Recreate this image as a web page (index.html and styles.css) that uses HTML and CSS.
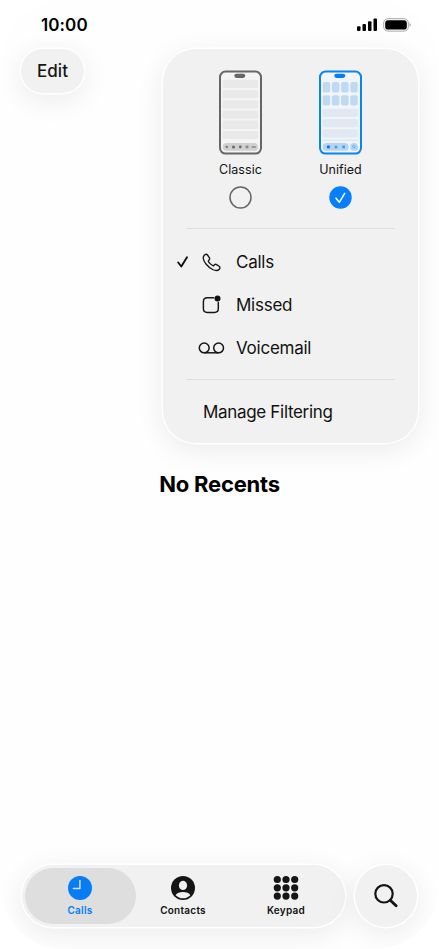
FILE: index.html
```html
<!DOCTYPE html>
<html lang="en">
<head>
<meta charset="utf-8">
<title>Recents</title>
<link rel="stylesheet" href="styles.css">
</head>
<body>
<div class="screen">
  <header class="status">
    <span class="time">10:00</span>
    <svg class="indicators" width="56" height="16" viewBox="0 0 56 16">
      <rect x="0" y="9.3" width="3.5" height="4.7" rx="1"/>
      <rect x="5.5" y="7" width="3.5" height="7" rx="1"/>
      <rect x="11" y="4.3" width="3.5" height="9.7" rx="1"/>
      <rect x="16.5" y="1.5" width="3.5" height="12.500" rx="1"/>
      <rect x="26.700" y="1.700" width="24.600" height="12.400" rx="4.200" fill="none" stroke="#aaa6a9"/>
      <rect x="28.200" y="3.200" width="21.600" height="9.400" rx="2.900"/>
      <path d="M52.500 5.900C54.300 6.500 54.300 9.200 52.500 9.800Z" fill="#aaa6a9"/>
    </svg>
  </header>

  <div class="toolbar">
    <button class="edit glass">Edit</button>
    <section class="menu glass">
      <div class="layouts">
        <div class="layout">
          <svg width="45" height="86" viewBox="0 0 45 86">
            <rect x="2" y="1.600" width="41" height="82" rx="5.500" fill="#f4f4f4" stroke="#666" stroke-width="2"/>
            <rect x="16.300" y="3.700" width="11" height="4.300" rx="2.150" fill="#666"/>
            <g fill="#e9e9e9">
              <rect x="4.700" y="9.800" width="35.300" height="8.300" rx="1.500"/>
              <rect x="4.700" y="20" width="35.300" height="8.300" rx="1.500"/>
              <rect x="4.700" y="30.200" width="35.300" height="8.300" rx="1.500"/>
              <rect x="4.700" y="40.400" width="35.300" height="8.300" rx="1.500"/>
              <rect x="4.700" y="50.600" width="35.300" height="8.300" rx="1.500"/>
              <rect x="4.700" y="60.800" width="35.300" height="8.300" rx="1.500"/>
            </g>
            <rect x="4.700" y="73" width="35.300" height="7.800" rx="3.900" fill="#d0d0d0"/>
            <g fill="#666">
              <path d="M8.800 75.200l.5 1 1.200.1-.9.800.3 1.200-1.100-.6-1.100.6.300-1.200-.9-.8 1.200-.1z"/>
              <circle cx="15.500" cy="76.900" r="1.500"/>
              <circle cx="22.300" cy="76.900" r="1.350"/>
              <rect x="27.700" y="75.600" width="2.700" height="2.700" fill="#888"/>
              <rect x="33.500" y="76.200" width="4.500" height="1.500" rx=".7" fill="#888"/>
            </g>
          </svg>
          <span>Classic</span>
          <svg class="radio" width="23" height="23" viewBox="0 0 23 23"><circle cx="11.500" cy="11.500" r="10.500" fill="none" stroke="#666" stroke-width="1.500"/></svg>
        </div>
        <div class="layout">
          <svg width="45" height="86" viewBox="0 0 45 86">
            <rect x="2" y="1.600" width="41" height="82" rx="5.500" fill="#f1f4f8" stroke="#0a84ef" stroke-width="2"/>
            <rect x="16.300" y="3.700" width="11" height="4.300" rx="2.150" fill="#087df0"/>
            <g fill="#bed9f1">
              <rect x="4.700" y="12" width="7.500" height="10.400" rx="2"/>
              <rect x="13.900" y="12" width="7.500" height="10.400" rx="2"/>
              <rect x="23.100" y="12" width="7.500" height="10.400" rx="2"/>
              <rect x="32.300" y="12" width="7.500" height="10.400" rx="2"/>
              <rect x="4.700" y="25.200" width="7.500" height="10.400" rx="2"/>
              <rect x="13.900" y="25.200" width="7.500" height="10.400" rx="2"/>
              <rect x="23.100" y="25.200" width="7.500" height="10.400" rx="2"/>
              <rect x="32.300" y="25.200" width="7.500" height="10.400" rx="2"/>
            </g>
            <g fill="#e2e8f1">
              <rect x="4.700" y="38.800" width="35.300" height="8.300" rx="1.500"/>
              <rect x="4.700" y="49" width="35.300" height="8.300" rx="1.500"/>
              <rect x="4.700" y="59.200" width="35.300" height="8.300" rx="1.500"/>
              <rect x="4.700" y="69.300" width="35.300" height="1.800"/>
            </g>
            <g fill="#b4d4f4">
              <rect x="4.700" y="73" width="26" height="7.800" rx="3.900"/>
              <circle cx="36.100" cy="76.900" r="3.900"/>
            </g>
            <circle cx="10.400" cy="76.900" r="1.700" fill="#087df0"/>
            <circle cx="18" cy="76.900" r="1.500" fill="#4b9ee8"/>
            <rect x="24.200" y="75.500" width="2.800" height="2.800" fill="#4b9ee8"/>
            <circle cx="35.800" cy="76.500" r="1.200" fill="none" stroke="#4b9ee8" stroke-width=".6"/>
            <path d="M36.700 77.400l1.200 1.200" stroke="#4b9ee8" stroke-width=".6"/>
          </svg>
          <span>Unified</span>
          <svg class="radio" width="23" height="23" viewBox="0 0 23 23"><circle cx="11.500" cy="11.500" r="11.200" fill="#087ffa"/><path d="M7 12.200l3.300 4.100 5.400-9" fill="none" stroke="#fff" stroke-width="1.500" stroke-linecap="round" stroke-linejoin="round"/></svg>
        </div>
      </div>
      <hr>
      <ul class="filters">
        <li>
          <svg class="tick" width="12" height="12" viewBox="0 0 12 12"><path d="M1.200 6.500l3.100 4L10 1.300" fill="none" stroke="#111" stroke-width="1.900" stroke-linecap="round" stroke-linejoin="round"/></svg>
          <svg class="icon" width="28" height="20" viewBox="0 0 28 20"><path d="M6.300 3.300C7.300 1.900 8.700 1.900 9.500 3l1.800 2.600c.7 1 .5 1.600-.2 2.300l-.5.600c-.4.500-.3.800 0 1.300 1 1.500 2.400 2.800 4 3.700.5.300.8.300 1.200-.1l.7-.7c.6-.6 1.300-.7 2.100-.1l2.500 1.700c1.100.8 1.100 1.900.2 2.900-1.600 1.800-4.100 1.500-6.600.3C9.800 15 5.400 9.700 5.200 6c0-1 .4-1.900 1.100-2.700Z" fill="none" stroke="#161616" stroke-width="1.350"/></svg>
          <span>Calls</span>
        </li>
        <li>
          <i class="tick"></i>
          <svg class="icon" width="28" height="20" viewBox="0 0 28 20"><path d="M15.600 2.800H9.300Q5.400 2.800 5.400 6.700v6.900q0 3.900 3.900 3.900h7.100q3.900 0 3.900-3.900V7.500" fill="none" stroke="#161616" stroke-width="1.450" stroke-linecap="round"/><circle cx="19.500" cy="3.600" r="3" fill="#111"/></svg>
          <span>Missed</span>
        </li>
        <li>
          <i class="tick"></i>
          <svg class="icon" width="28" height="20" viewBox="0 0 28 20"><g fill="none" stroke="#161616" stroke-width="1.500"><circle cx="6.200" cy="9.900" r="4.900"/><circle cx="20.600" cy="9.900" r="4.900"/><path d="M6.200 14.800H20.600"/></g></svg>
          <span>Voicemail</span>
        </li>
      </ul>
      <hr>
      <div class="manage">Manage Filtering</div>
    </section>
  </div>

  <h1>No Recents</h1>

  <nav class="bottom">
    <div class="tabs glass">
      <a class="tab active">
        <svg width="26" height="26" viewBox="0 0 26 26"><circle cx="13" cy="13" r="12" fill="#077df5"/><path d="M12.900 5.500v8.100H6.300" fill="none" stroke="#ddd" stroke-width="1.500" stroke-linecap="round" stroke-linejoin="round"/></svg>
        <span>Calls</span>
      </a>
      <a class="tab">
        <svg width="26" height="26" viewBox="0 0 26 26"><circle cx="13" cy="13" r="12" fill="#151515"/><ellipse cx="13" cy="10.400" rx="4.100" ry="4.600" fill="#f1f1f1"/><path d="M5.600 20.200C7.600 15.900 18.400 15.900 20.400 20.200C16.300 24.300 9.700 24.300 5.600 20.200Z" fill="#f1f1f1"/></svg>
        <span>Contacts</span>
      </a>
      <a class="tab">
        <svg width="26" height="26" viewBox="0 0 26 26"><g fill="#151515"><circle cx="4.300" cy="4.500" r="3.600"/><circle cx="13" cy="4.500" r="3.600"/><circle cx="21.700" cy="4.500" r="3.600"/><circle cx="4.300" cy="12.800" r="3.600"/><circle cx="13" cy="12.800" r="3.600"/><circle cx="21.700" cy="12.800" r="3.600"/><circle cx="4.300" cy="21.100" r="3.600"/><circle cx="13" cy="21.100" r="3.600"/><circle cx="21.700" cy="21.100" r="3.600"/></g></svg>
        <span>Keypad</span>
      </a>
    </div>
    <button class="search glass" aria-label="Search">
      <svg width="26" height="26" viewBox="0 0 26 26" fill="none" stroke="#151515"><circle cx="11" cy="10.800" r="8.700" stroke-width="2.200"/><path d="M17.300 17.200l5.800 5.600" stroke-width="2.900" stroke-linecap="round"/></svg>
    </button>
  </nav>
</div>
</body>
</html>
```

FILE: styles.css
```css
* { box-sizing: border-box; }

body {
  margin: 0;
  background: #fff;
  color: #111;
  font-family: Inter, "Liberation Sans", sans-serif;
}

.screen {
  display: flex;
  flex-direction: column;
  width: 439px;
  height: 949px;
  overflow: hidden;
  border-radius: 64px;
  background: #fefefe;
}

.status {
  display: flex;
  flex: none;
  justify-content: space-between;
  height: 45px;
  padding: 15px 26px 0 41px;
}

.time {
  color: #000;
  font-size: 17px;
  font-weight: 600;
  line-height: 21px;
  letter-spacing: 0.1px;
}

.indicators { margin: 2px 0 0; }

.glass {
  border: 1px solid #fff;
  background: #f1f1f1;
  box-shadow: 0 0 0 0.5px #fff, 0 6px 28px rgba(0, 0, 0, 0.08);
}

.toolbar {
  display: flex;
  flex: none;
  align-items: flex-start;
  justify-content: space-between;
  padding: 3px 20px 0 20px;
}

.edit {
  width: 65px;
  height: 46px;
  padding: 0;
  border-radius: 23px;
  color: #161616;
  font: 450 17px/20px Inter, sans-serif;
  letter-spacing: 0.1px;
}

.menu {
  width: 257px;
  height: 396px;
  border-radius: 34px;
}

.layouts {
  display: flex;
  justify-content: center;
  gap: 30px;
  padding: 21px 0 0;
}

.layout {
  display: flex;
  flex-direction: column;
  align-items: center;
  width: 70px;
  font-size: 12.5px;
  line-height: 16px;
  letter-spacing: 0.05px;
}

.layout > span { margin-top: 6px; }

.radio { margin-top: 8px; }

hr {
  height: 1px;
  margin: 19px 23px 0;
  border: 0;
  background: #dedede;
}

.filters {
  margin: 11px 0 0;
  padding: 0;
  list-style: none;
}

.filters li {
  display: flex;
  align-items: center;
  height: 43px;
  padding-left: 14px;
  font-size: 17px;
  letter-spacing: -0.25px;
}

.tick { flex: none; width: 12px; }

.icon { margin: 0 10px 0 9px; }

.filters + hr { margin-top: 10px; }

.manage {
  padding: 22px 0 0 40px;
  font-size: 17px;
  line-height: 21px;
  letter-spacing: -0.32px;
}

h1 {
  margin: 27px 0 0;
  color: #000;
  font-size: 22px;
  font-weight: 700;
  line-height: 27px;
  letter-spacing: -0.2px;
  text-align: center;
}

.bottom {
  display: flex;
  gap: 8px;
  margin-top: auto;
  padding: 0 21px 21px;
}

.tabs {
  display: flex;
  width: 325px;
  height: 64px;
  padding: 3px 2.5px;
  border-radius: 32px;
}

.tab {
  display: flex;
  flex-direction: column;
  align-items: center;
  width: 103px;
  padding-top: 7px;
  border-radius: 29px;
  font-size: 10px;
  font-weight: 600;
  line-height: 12px;
  letter-spacing: 0.25px;
}

.tab span { margin-top: 3px; }

.tab.active {
  width: 111px;
  background: #dedede;
  color: #077df5;
}

.tab.active + .tab { margin-left: -4px; }

.search {
  display: grid;
  place-items: center;
  width: 64px;
  height: 64px;
  padding: 0;
  border-radius: 50%;
}
```
